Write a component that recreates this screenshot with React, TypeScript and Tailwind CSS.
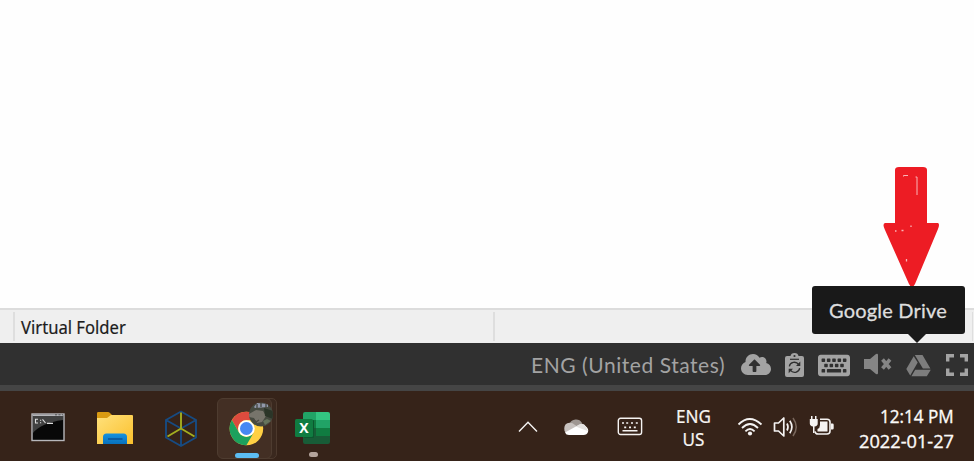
import type { ReactNode } from "react";
import { FaCloudUploadAlt, FaKeyboard } from "react-icons/fa";

function RedArrow() {
  return (
    <svg className="absolute left-[883px] top-[166px]" width="57" height="122" viewBox="0 0 57 122">
      <path
        d="M12 4Q12 1 16 1H40Q44 1 44 4V57H55Q57 58 55 63L32 118Q29 124 26 118L2 64Q-1 58 2 57H12Z"
        fill="#ed1c24"
      />
      <path d="M20.5 10.5V9.5H25M32.5 11H34V29" fill="none" stroke="#f9b5b7" strokeWidth="1" />
      <path d="M12 65h1.5M18.5 64.5h2M28 59.5v1.5M23.5 93v2.5" stroke="#f9b5b7" strokeWidth="1.3" />
    </svg>
  );
}

function Tooltip() {
  return (
    <div className="absolute left-[812px] top-[286px] h-[48px] w-[153px] rounded-[3px] bg-[#191919]">
      <span className="absolute left-[17px] top-[10px] origin-left whitespace-nowrap font-[Lato] text-[20px] leading-[28px] tracking-[0.2px] text-[#dedede] [-webkit-text-stroke:0.3px_#dedede]">
        Google Drive
      </span>
      <svg className="absolute left-[95px] top-[47px]" width="20" height="10" viewBox="0 0 20 10">
        <path d="M0 0H20L10 10Z" fill="#191919" />
      </svg>
    </div>
  );
}

function StatusBar() {
  return (
    <div className="flex h-[35px] border-t-2 border-[#dcdcdc] bg-[#efefef] pb-[2px] pt-[2px]">
      <div className="w-[15px] border-r-2 border-[#dedede]" />
      <div className="w-[480px] border-r-2 border-[#dedede] pl-[6px]">
        <span className="inline-block origin-left scale-x-[0.95] whitespace-nowrap font-['Noto_Sans'] text-[17.5px] leading-[30px] text-[#1c1c1c] [-webkit-text-stroke:0.2px_#1c1c1c]">
          Virtual Folder
        </span>
      </div>
      <div className="w-[478px] border-r border-[#dedede]" />
    </div>
  );
}

function RemoteToolbar() {
  return (
    <div className="flex h-[48px] items-start border-b-[6px] border-[#454545] bg-[#303030] text-[#a3a3a3]">
      <span className="ml-[531px] w-[210px] whitespace-nowrap font-[Lato] text-[21px] leading-[43px] tracking-[0.55px]">
        ENG (United States)
      </span>
      <FaCloudUploadAlt className="mt-[8px] h-[27px] w-[30px]" />
      <svg className="ml-[14px] mt-[10px]" width="19" height="24" viewBox="0 0 19 24">
        <path d="M2 3H5.5Q6 0 9.5 0Q13 0 13.5 3H17Q19 3 19 5V22Q19 24 17 24H2Q0 24 0 22V5Q0 3 2 3Z" fill="currentColor" />
        <circle cx="9.5" cy="3" r="1.1" fill="#303030" />
        <path d="M5 6.3H14" stroke="#303030" strokeWidth="1.2" />
        <path d="M4.3 13.3C5 9 11 7.8 13.7 11.5M14.7 15.2C14 19.8 8 20.8 5.3 17.2" fill="none" stroke="#303030" strokeWidth="1.3" />
        <path d="M15.3 8.6V13H11ZM3.7 20.2V15.8H8Z" fill="#303030" />
      </svg>
      <FaKeyboard className="ml-[14px] mt-[8px] h-[29px] w-[32px]" />
      <svg className="ml-[14px] mt-[10px] text-[#858585]" width="28" height="23" viewBox="0 0 28 23">
        <path d="M0 6H6L12 1Q14 0 14 2V20Q14 22 12 21L6 16H0Z" fill="currentColor" />
        <path d="M18.5 6.5L26 15.5M26 6.5L18.5 15.5" stroke="currentColor" strokeWidth="3.6" />
      </svg>
      <svg className="ml-[14px] mt-[12px] text-[#7d7d7d]" width="26" height="22" viewBox="0 0 26 22">
        <path d="M8.8 0H16.5L24.4 13.5H16.9ZM7.7 1.2L11.7 7.6L4.2 20.5L.3 13.9ZM9.2 14.8H24.8L20.8 21.3H5.4Z" fill="currentColor" />
      </svg>
      <svg className="ml-[14px] mt-[11px]" width="22" height="22" viewBox="0 0 22 22">
        <path d="M1.7 7.5V1.7H8M14 1.7H20.3V7.5M20.3 14.5V20.3H14M8 20.3H1.7V14.5" fill="none" stroke="currentColor" strokeWidth="3.4" />
      </svg>
    </div>
  );
}

function TerminalIcon() {
  return (
    <svg className="ml-[31px] mt-[22px]" width="34" height="29" viewBox="0 0 34 29">
      <rect x="1" y="1" width="32" height="26.5" fill="#080808" stroke="#b7b7bb" strokeWidth="1.4" />
      <path d="M1.5 1.5H32.5V3H1.5Z" fill="#b7b7bb" />
      <path d="M24 1.8h2M27.5 1.8h2M31 1.8h1" stroke="#555" strokeWidth="1" />
      <path d="M2 3H32V7Q10 10 2 20Z" fill="#414141" />
      <path d="M7 6.3H4.5V10H7M9 7.2h1.2M9 9.7h1.2M11.5 6.3L14.5 10M16 10.4H22" fill="none" stroke="#ddd" strokeWidth="1.1" />
    </svg>
  );
}

function FolderIcon() {
  return (
    <svg className="ml-[31px] mt-[20px]" width="38" height="35" viewBox="0 0 38 35">
      <defs>
        <linearGradient id="folder" x1="0" y1="0" x2="1" y2="1">
          <stop stopColor="#ffe17c" />
          <stop offset="1" stopColor="#fbc02c" />
        </linearGradient>
        <linearGradient id="folder-front" x1="0" y1="0" x2="0" y2="1">
          <stop stopColor="#1592df" />
          <stop offset="1" stopColor="#0871bd" />
        </linearGradient>
      </defs>
      <path d="M1 9V2.3Q1 1 2.3 1H12Q13 1 14 2L16 4H23V10H1Z" fill="#d99a12" />
      <path d="M1 7H11L15 4H36Q37 4 37 5V33H1Z" fill="url(#folder)" />
      <path d="M7 33V26Q7 22.5 10.5 22.5H27.5Q31 22.5 31 26V33Z" fill="url(#folder-front)" />
      <path d="M12 28H26.5" stroke="#0b5195" strokeWidth="1.5" />
    </svg>
  );
}

function CubeIcon() {
  return (
    <svg className="ml-[30px] mt-[19px]" width="34" height="38" viewBox="0 0 34 38">
      <path d="M17 1.5L32 10V27.5L17 36L2 27.5V10ZM2 10L17 18.5L32 10M17 18.5V36" fill="none" stroke="#174b82" strokeWidth="1.9" />
      <path d="M17 2.5V18.5L3.5 26.5M17 18.5L30.5 26.5" fill="none" stroke="#a3ae20" strokeWidth="1.9" />
    </svg>
  );
}

function ChromeButton() {
  return (
    <div className="relative ml-[19px] mt-[7px] h-[61px] w-[60px]">
      <div className="absolute inset-y-0 left-[40px] right-0 rounded-[5px] border border-[#4c392d] bg-[#3a281e]" />
      <div className="relative h-[61px] w-[55px] rounded-[6px] border border-[#4e3c30] bg-[#432f24]">
        <svg className="absolute left-0 top-0" width="58" height="60" viewBox="0 0 58 60">
          <g transform="translate(28.4 29.5)">
            <circle r="16.8" fill="#ffd044" />
            <path d="M0 -8.4H14.55A16.8 16.8 0 0 0 -14.55 -8.4L-7.27 4.2A8.4 8.4 0 0 1 0 -8.4Z" fill="#dc4b3e" />
            <path d="M-14.55 -8.4A16.8 16.8 0 0 0 0 16.8L7.27 4.2A8.4 8.4 0 0 1 -7.27 4.2Z" fill="#1ca15d" />
            <circle r="8.3" fill="#fff" />
            <circle r="6.4" fill="#4688f3" />
          </g>
          <clipPath id="avatar">
            <circle cx="43" cy="15.5" r="12" />
          </clipPath>
          <g clipPath="url(#avatar)">
            <path d="M31 3H56V28H31Z" fill="#464a40" />
            <path d="M36 8L39 4L50 5L50 8L37 9Z" fill="#9298aa" />
            <path d="M39 5v4M43 4v4M48 5v4" stroke="#45453f" strokeWidth="1.3" />
            <path d="M31 15L38 11L45 12L48 17L44 23L39 24L36 19L31 18Z" fill="#77746b" />
            <path d="M46 9L55 12V20L47 17Z" fill="#2b3528" />
            <path d="M45 22L49 20L53 22L47 26Z" fill="#66745c" />
            <path d="M35 20L38 23L41 21" fill="none" stroke="#4b4942" strokeWidth="1.5" />
          </g>
        </svg>
        <div className="absolute bottom-[0px] left-[17px] h-[5px] w-[24px] rounded-full bg-[#5cbcf2]" />
      </div>
    </div>
  );
}

function ExcelButton() {
  return (
    <div className="relative ml-[17px] mt-[20px] h-[50px] w-[37px]">
      <svg width="37" height="34" viewBox="0 0 37 34">
        <path d="M9 3Q9 1 11 1H22V9H9Z" fill="#21a366" />
        <path d="M22 1H34Q36 1 36 3V9H22Z" fill="#33c481" />
        <path d="M9 9H22V25H9Z" fill="#107c41" />
        <path d="M22 9H36V17H22Z" fill="#21a366" />
        <path d="M22 17H36V25H22Z" fill="#107c41" />
        <path d="M9 17H22V25H36V31Q36 33 34 33H11Q9 33 9 31Z" fill="#185c37" />
        <rect x="10" y="9" width="10" height="18" rx="1" fill="#0b572e" />
        <rect x="1" y="8" width="18" height="18" rx="1.5" fill="#107c41" />
      </svg>
      <span className="absolute left-[1px] top-[8px] w-[18px] text-center font-['Open_Sans'] text-[14px] font-bold leading-[18px] text-white">
        X
      </span>
      <div className="absolute left-[15px] top-[41px] h-[5px] w-[9px] rounded-full bg-[#b4a39b]" />
    </div>
  );
}

function TrayIcons() {
  return (
    <>
      <svg className="ml-[187px] mt-[29px]" width="20" height="13" viewBox="0 0 20 13">
        <path d="M1 11.5L10 2.3L19 11.5" fill="none" stroke="#f5f3f2" strokeWidth="1.4" />
      </svg>
      <svg className="ml-[25px] mt-[27px]" width="26" height="18" viewBox="0 0 26 18">
        <path d="M6.5 6A7 7 0 0 1 19 5L21 10H6Z" fill="#9f9792" />
        <path d="M6.5 4.7Q9.5 4.5 12 7L17 10L6 16A5.7 5.7 0 0 1 6.5 4.7Z" fill="#c8c2bf" />
        <path d="M12 9L16 7Q20 4.5 23 8.5Q26 11 25 14Q24 17 20.5 17H6Q3 17 2 14.5Z" fill="#fff" />
        <path d="M13 8.5Q20 3.5 23 9L25 13L19 11Z" fill="#e5e2e0" />
      </svg>
      <svg className="ml-[28px] mt-[26px]" width="26" height="19" viewBox="0 0 26 19">
        <rect x="1.3" y="1.3" width="23.3" height="16.2" rx="2.2" fill="none" stroke="#f5f3f2" strokeWidth="1.4" />
        <path d="M5 6h2M9.2 6h2M14 6h2M18.8 6h2M7.2 10.4h2M12 10.4h2M16.8 10.4h2M5.5 13.8h15" stroke="#f5f3f2" strokeWidth="1.6" />
      </svg>
      <div className="ml-[30px] mt-[14px] w-[41px] text-center font-['Noto_Sans'] text-[18px] leading-[23px] text-[#f7f4f2] [-webkit-text-stroke:0.2px_#f7f4f2]">
        <span className="inline-block scale-x-[0.95]">ENG</span>
        <span className="inline-block scale-x-[0.95]">US</span>
      </div>
      <svg className="ml-[23px] mt-[26px]" width="26" height="20" viewBox="0 0 26 20">
        <g fill="none" stroke="#f5f3f2" strokeWidth="1.8">
          <path d="M1.5 7.5Q12.5 -3.5 24.5 7.5" />
          <path d="M5 11Q13 3 21 11" />
          <path d="M8.4 14.3Q13 9.7 17.6 14.3" />
        </g>
        <circle cx="13" cy="16.5" r="2.1" fill="#f5f3f2" />
      </svg>
      <svg className="ml-[10px] mt-[25px]" width="26" height="22" viewBox="0 0 26 22">
        <path d="M1.5 7H5.5L10.8 2V20L5.5 15H1.5Z" fill="none" stroke="#f5f3f2" strokeWidth="1.7" strokeLinejoin="round" />
        <path d="M14 7.5Q16 11 14 14.5M16.8 4.8Q21 11 16.8 17.2" fill="none" stroke="#f5f3f2" strokeWidth="1.7" />
        <path d="M20 2Q26.5 11 20 20" fill="none" stroke="#79675c" strokeWidth="1.5" />
      </svg>
      <svg className="ml-[10px] mt-[25px]" width="26" height="20" viewBox="0 0 26 20">
        <path d="M11 3.2H18Q21 3.2 21 6V15Q21 18 18 18H9Q6.4 18 6 15.3" fill="none" stroke="#f5f3f2" strokeWidth="1.6" />
        <path d="M11 5.5H18.5V15.5H8.5V13Q11 12 11 9Z" fill="#f5f3f2" />
        <path d="M22 7.5h1.5q1.2 0 1.2 1.2v3.6q0 1.2-1.2 1.2H22ZM2 0V3H.8V7.5Q1 10 4 10.5V17H5.5V10.5Q8.7 10 8.7 7.5V3H7.5V0H6V3H3.5V0Z" fill="#f5f3f2" />
      </svg>
    </>
  );
}

function Clock() {
  return (
    <div className="ml-auto mr-[20px] mt-[12px] flex flex-col items-end whitespace-nowrap font-['Open_Sans'] text-[18px] font-medium leading-[26px] text-[#fcfaf8] [-webkit-text-stroke:0.35px_#fcfaf8]">
      <span className="origin-right scale-x-[0.95]">12:14 PM</span>
      <span className="relative top-[-1px] origin-right scale-x-[1.01]">2022-01-27</span>
    </div>
  );
}

function Taskbar({ children }: { children: ReactNode }) {
  return <div className="flex h-[70px] items-start bg-[#362319] [&>*]:shrink-0">{children}</div>;
}

export default function App() {
  return (
    <main className="relative flex h-[461px] w-[974px] flex-col overflow-hidden bg-white">
      <div className="h-[308px] shrink-0 bg-[#fefefe]" />
      <StatusBar />
      <RemoteToolbar />
      <Taskbar>
        <TerminalIcon />
        <FolderIcon />
        <CubeIcon />
        <ChromeButton />
        <ExcelButton />
        <TrayIcons />
        <Clock />
      </Taskbar>
      <RedArrow />
      <Tooltip />
    </main>
  );
}
